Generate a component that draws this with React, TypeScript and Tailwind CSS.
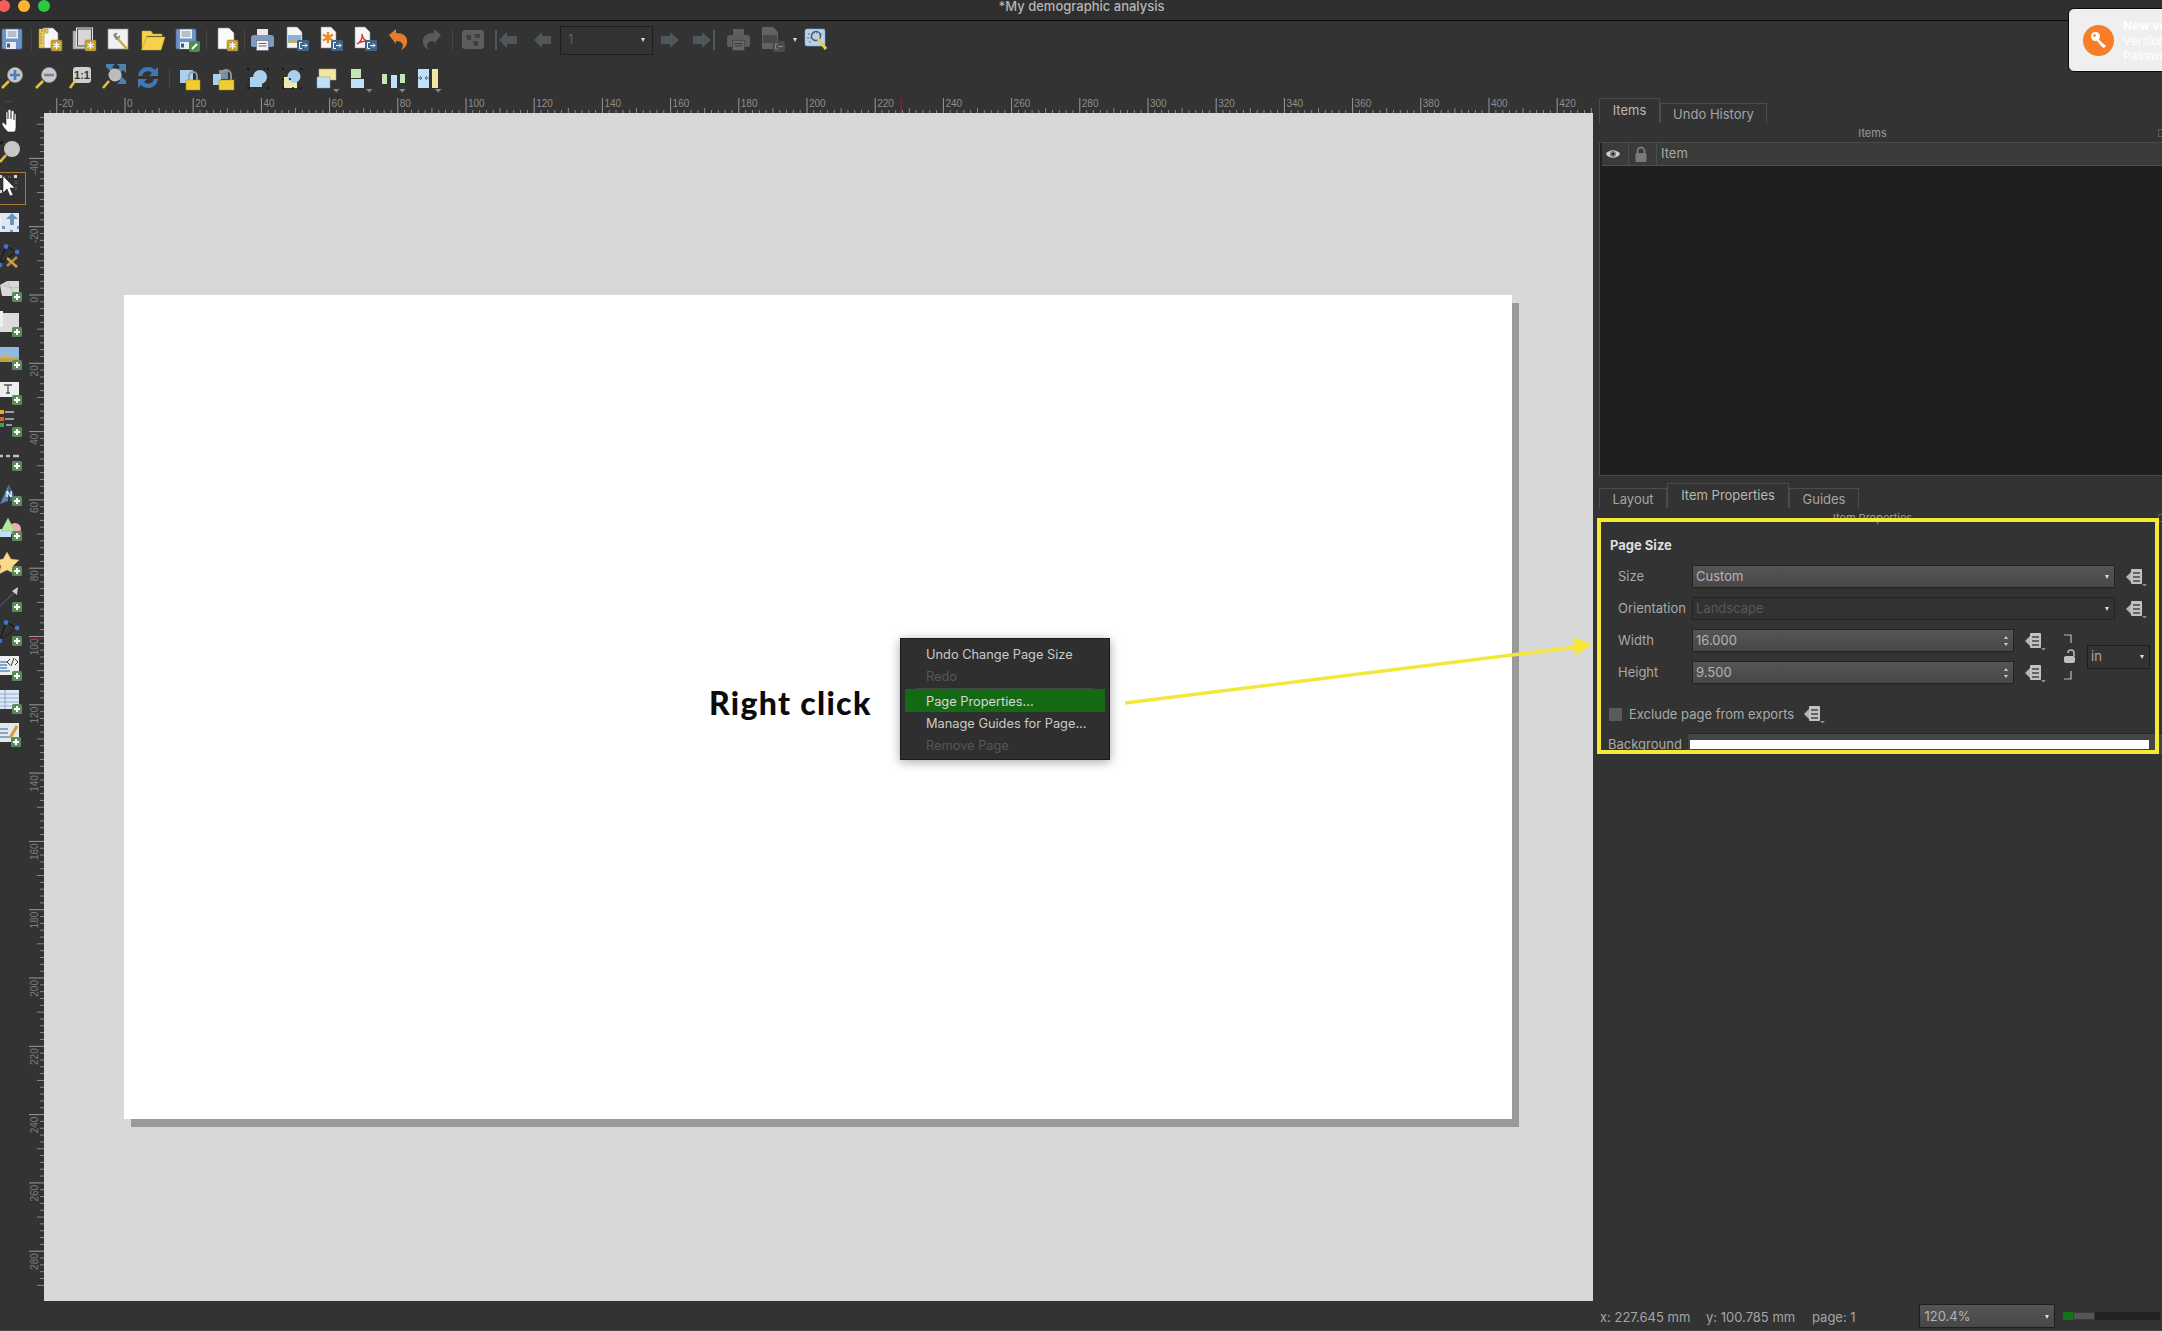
import React from "react";

const S = ({ children, w = 28 }: { children: React.ReactNode; w?: number }) => (
  <svg width={w} height={28} viewBox={`0 0 ${w} 28`} className="shrink-0 overflow-visible">{children}</svg>
);

const Gold = ({ x = 16, y = 14, op = 1 }: { x?: number; y?: number; op?: number }) => (
  <g opacity={op}>
    <rect x={x} y={y} width="11" height="11" rx="1.5" fill="#c6a32c" stroke="#9a7f20" strokeWidth=".5" />
    <path d={`M${x + 5.5} ${y + 2}v7M${x + 2.4} ${y + 3.7}l6.2 3.6M${x + 8.6} ${y + 3.7}l-6.2 3.6`} stroke="#fff" strokeWidth="1.3" />
  </g>
);
const Exp = ({ x = 15, y = 14 }: { x?: number; y?: number }) => (
  <g>
    <rect x={x} y={y} width="12" height="11" rx="1.5" fill="#3f6485" />
    <path d={`M${x + 5} ${y + 2.5}h-2.5v6h2.5`} stroke="#fff" strokeWidth="1" fill="none" />
    <path d={`M${x + 5} ${y + 5.5}h5M${x + 8} ${y + 3.5}l2 2-2 2`} stroke="#fff" strokeWidth="1" fill="none" />
  </g>
);
const Plus = ({ x = 18, y = 17 }: { x?: number; y?: number }) => (
  <g>
    <rect x={x} y={y} width="10" height="10" rx="1.5" fill="#5c8a5f" />
    <path d={`M${x + 5} ${y + 2}v6M${x + 2} ${y + 5}h6`} stroke="#fff" strokeWidth="2" />
  </g>
);
const PageShape = ({ x = 6, y = 2, w = 15, h = 21, fill = "#f6f6f6" }: { x?: number; y?: number; w?: number; h?: number; fill?: string }) => (
  <path d={`M${x} ${y}h${w - 5}l5 5v${h - 5}h-${w}z`} fill={fill} stroke="#8c8c8c" strokeWidth=".6" />
);
const Floppy = () => (
  <g>
    <rect x="4" y="3" width="20" height="20" rx="1.5" fill="#6f93c4" stroke="#4d6f9c" strokeWidth=".7" />
    <rect x="8" y="3.5" width="12" height="9" fill="#eef0f3" />
    <path d="M9.5 6h9M9.5 8h9M9.5 10h9" stroke="#7d8ea6" strokeWidth="1" />
    <rect x="8" y="16" width="10" height="7" fill="#e9edf2" />
    <rect x="9" y="17.5" width="3" height="4" fill="#3e5a80" />
  </g>
);

const Mag = ({ children }: { children?: React.ReactNode }) => (
  <g>
    <circle cx="17" cy="11" r="7.5" fill="#c9c9c9" stroke="#9b9b9b" strokeWidth=".7" />
    <path d="M11 17 4 24" stroke="#e4c044" strokeWidth="2.6" />
    {children}
  </g>
);

const DropTri = ({ x }: { x: number }) => <path d={`M${x - 3} 25h6.500l-3.250 3.500z`} fill="#888" />;

const icons: Record<string, React.ReactNode> = {
  save: <Floppy />,
  newLayout: (
    <g>
      <PageShape x={7} y={2} w={15} h={20} />
      <path d="M3 3h9v4H8v15H3z" fill="#e8cb58" stroke="#a98f2b" strokeWidth=".6" />
      <path d="M4 8h2M4 11h2M4 14h2M4 17h2M6 4v2M9 4v2" stroke="#8a7423" strokeWidth=".8" />
      <Gold x={15} y={14} />
    </g>
  ),
  dup: (
    <g>
      <rect x="3" y="5" width="16" height="18" fill="#b5b5b5" stroke="#888" strokeWidth=".6" />
      <rect x="6.5" y="2" width="16" height="19" fill="#4a4a4a" stroke="#e6e6e6" strokeWidth="1" />
      <rect x="8" y="3.500" width="13" height="16" fill="#d6d6d6" />
      <Gold x={15} y={14} />
    </g>
  ),
  manager: (
    <g>
      <rect x="4" y="3" width="20" height="20" fill="#f1f1f1" stroke="#8e8e8e" strokeWidth=".7" />
      <path d="M9 9a4 4 0 0 1 5-2l-2 2 2 2 2-2a4 4 0 0 1-4 5z" fill="#8b8b8b" />
      <path d="M14 13l9 10" stroke="#c9ad46" strokeWidth="2.5" />
    </g>
  ),
  open: <path d="M4 5h9l2 3h9v2H9l-5 13zM8.5 11H27l-4 13H3.5z" fill="#f5d24b" stroke="#c9a52c" strokeWidth=".5" />,
  saveAs: (
    <g>
      <Floppy />
      <rect x="17" y="15" width="11" height="11" rx="2" fill="#4f8a55" />
      <path d="M20 23l5-5" stroke="#fff" strokeWidth="2" />
    </g>
  ),
  newPage: (
    <g>
      <PageShape x={6} y={2} w={16} h={21} fill="#fafafa" />
      <Gold x={15} y={14} />
    </g>
  ),
  print: (
    <g>
      <rect x="9" y="3" width="11" height="8" fill="#e9e9e9" />
      <path d="M6 9h17a3 3 0 0 1 3 3v7a2 2 0 0 1-2 2H5a2 2 0 0 1-2-2v-7a3 3 0 0 1 3-3z" fill="#7e9ac0" />
      <rect x="8.5" y="14.5" width="12" height="10" fill="#f1f1f1" stroke="#5d6b7d" strokeWidth=".6" />
      <path d="M10.5 17.5h8M10.5 20h8" stroke="#5d6b7d" />
    </g>
  ),
  expImg: (
    <g>
      <PageShape x={5} y={1} w={15} h={21} />
      <rect x="6" y="9" width="13" height="8" fill="#86b2df" />
      <path d="M6 17l5-4 4 2 4-2v4z" fill="#cfaa57" />
      <Exp />
    </g>
  ),
  expSvg: (
    <g>
      <PageShape x={5} y={1} w={15} h={21} />
      <path d="M12 6v11M7 8.5l10 6M17 8.5l-10 6" stroke="#ee8a1e" strokeWidth="2.4" />
      <Exp />
    </g>
  ),
  expPdf: (
    <g>
      <PageShape x={5} y={1} w={15} h={21} />
      <path d="M7 18c3-1 6-6 5-10 0 4 3 7 6 7-3 0-7 0-11 3z" fill="none" stroke="#d9322b" strokeWidth="1.4" />
      <Exp />
    </g>
  ),
  undo: <path d="M5 9 12 3v4c7 0 12 3 11 10-.5 3-3 6-6 7 3-3 3-9-5-9v3z" fill="#e67c2c" />,
  redo: <path d="M23 9 16 3v4c-7 0-12 3-11 10 .5 3 3 6 6 7-3-3-3-9 5-9v3z" fill="#565b5e" />,
  map: (
    <g>
      <rect x="3" y="4" width="22" height="19" rx="3" fill="#5d5d5d" />
      <path d="M7 9h5v5H8zM15 8h6v4h-4zM14 15h5v5h-4z" fill="#3f3f3f" />
    </g>
  ),
  first: (
    <g fill="#50575b">
      <path d="M5 14 13 6v4h10v8H13v4z" />
      <rect x="1" y="4" width="2" height="20" />
    </g>
  ),
  prev: <path d="M6 14 14 6v4h9v8h-9v4z" fill="#50575b" />,
  next: <path d="M23 14 14 6v4H5v8h9v4z" fill="#50575b" />,
  last: (
    <g fill="#50575b">
      <path d="M21 14 12 6v4H3v8h9v4z" />
      <rect x="23" y="4" width="2" height="20" />
    </g>
  ),
  printOff: (
    <g>
      <rect x="9" y="3" width="11" height="8" fill="#5e5e5e" />
      <path d="M6 9h17a3 3 0 0 1 3 3v7a2 2 0 0 1-2 2H5a2 2 0 0 1-2-2v-7a3 3 0 0 1 3-3z" fill="#5c5c5c" />
      <rect x="8.5" y="14.5" width="12" height="10" fill="#666" stroke="#3b3b3b" strokeWidth=".6" />
      <path d="M10.5 17.5h8M10.5 20h8" stroke="#3b3b3b" />
    </g>
  ),
  expOff: (
    <g>
      <path d="M4 1h11l5 5v17H4z" fill="#626262" />
      <rect x="5" y="9" width="14" height="8" fill="#484848" />
      <rect x="15" y="15" width="12" height="11" rx="1.5" fill="#4a4a4a" />
      <path d="M20 18h-2.5v5H20M20 20.5h5" stroke="#8a8a8a" fill="none" />
    </g>
  ),
  atlas: (
    <g>
      <rect x="2" y="3" width="20" height="17" rx="2" fill="#b7d2ee" stroke="#86a7cb" strokeWidth=".6" />
      <path d="M5 8h3M10 7h4M17 8h3M4 12h5M6 16h3M15 15h3" stroke="#4d6d92" strokeWidth="1.2" strokeDasharray="2 1" />
      <circle cx="13" cy="10" r="4.5" fill="none" stroke="#555" strokeWidth="1.4" />
      <path d="M15 13l8 10" stroke="#e7ca55" strokeWidth="3" />
    </g>
  ),
  zoomIn: (
    <Mag>
      <path d="M17 6v10M12 11h10" stroke="#4a7fbe" strokeWidth="2.6" />
    </Mag>
  ),
  zoomOut: (
    <Mag>
      <path d="M12 11h10" stroke="#6f87a3" strokeWidth="2.6" />
    </Mag>
  ),
  zoom11: (
    <g>
      <rect x="7" y="3" width="18" height="16" rx="3" fill="#cfcfcf" />
      <path d="M9 17 4 24" stroke="#e4c044" strokeWidth="2.6" />
      <text x="16" y="15" textAnchor="middle" fontSize="11" fontWeight="700" fill="#333" fontFamily="'Liberation Sans', sans-serif">1:1</text>
    </g>
  ),
  zoomFull: (
    <g>
      <path d="M6 0h9l-3 3 3 3-3 3-6-6zM26 0v9l-3-3-3 3-3-3 3-3-3-3zM26 20h-9l3-3-3-3 3-3 6 6z" fill="#507fb3" />
      <circle cx="15" cy="11" r="6.5" fill="#bdbdbd" />
      <path d="M9 17 3 24" stroke="#e4c044" strokeWidth="2.6" />
    </g>
  ),
  refresh: (
    <g fill="#3f78b5">
      <path d="M4 12C5 6 9 3 14 3c3 0 5 1 7 3l3-3v9h-9l3-3c-3-3-9-2-10 3z" />
      <path d="M24 15c-1 6-5 9-10 9-3 0-5-1-7-3l-3 3v-9h9l-3 3c3 3 9 2 10-3z" />
    </g>
  ),
  lock: (
    <g>
      <rect x="4" y="6" width="13" height="13" fill="#a9d0ee" />
      <path d="M13 16v-4a4 4 0 0 1 8 0v4" fill="none" stroke="#9a9a9a" strokeWidth="1.800" />
      <rect x="10" y="16" width="14" height="10" fill="#eccd32" stroke="#a88f17" strokeWidth=".5" />
    </g>
  ),
  unlock: (
    <g>
      <rect x="3" y="10" width="8" height="11" fill="#a9d0ee" />
      <rect x="9" y="6" width="9" height="9" fill="#a9d0ee" opacity=".6" />
      <path d="M11 11a5 5 0 0 1 10 0v5" fill="none" stroke="#9a9a9a" strokeWidth="1.800" />
      <rect x="9" y="16" width="15" height="10" fill="#eccd32" stroke="#a88f17" strokeWidth=".5" />
    </g>
  ),
  group: (
    <g>
      <rect x="6" y="13" width="12" height="10" fill="#a9d0ee" />
      <circle cx="16" cy="13" r="7" fill="#a9d0ee" />
      <path d="M5 5H23M24 5V24M5 24H23M4 5V24" stroke="#111" strokeWidth=".8" strokeDasharray="1 4" />
      <path d="M3 5h2M23 5h2M3 24h2M23 24h2" stroke="#111" strokeWidth="1.600" />
    </g>
  ),
  ungroup: (
    <g>
      <rect x="6" y="13" width="13" height="11" fill="#f0eaa6" />
      <circle cx="16" cy="12.500" r="6.500" fill="#a9d0ee" />
      <path d="M4 5h2M22 5h2M4 24h2M22 24h2M14 24h2M5 15v1M11 15h2" stroke="#111" strokeWidth="1.600" />
    </g>
  ),
  raise: (
    <g>
      <rect x="7" y="5" width="17" height="11" fill="#efe7a2" stroke="#b0a96b" strokeWidth=".5" />
      <rect x="5" y="13" width="13" height="11" fill="#bfe0f7" stroke="#7f9cb3" strokeWidth=".5" />
      <DropTri x={24} />
    </g>
  ),
  align: (
    <g>
      <rect x="5" y="5" width="10" height="9" fill="#bfe8b6" />
      <rect x="5" y="15" width="13" height="9" fill="#bfe0f7" />
      <DropTri x={23} />
    </g>
  ),
  distribute: (
    <g>
      <rect x="2" y="10" width="5" height="10" fill="#bfe8b6" />
      <rect x="11" y="11" width="6" height="13" fill="#bfe0f7" />
      <rect x="20" y="10" width="5" height="9" fill="#bfe8b6" />
      <DropTri x={22} />
    </g>
  ),
  resize: (
    <g>
      <rect x="4" y="5" width="11" height="19" fill="#bfe0f7" />
      <path d="M4 14h3M15 14h-3M6 12l2 2-2 2M13 12l-2 2 2 2" stroke="#445" strokeWidth=".8" fill="none" />
      <rect x="18" y="5" width="6" height="19" fill="#efe7a2" />
      <DropTri x={24} />
    </g>
  ),
};

const tools: Record<string, React.ReactNode> = {
  hand: <path transform="translate(5 1)" d="M10 25c-3-3-6-6-6-9 1-1 3 0 4 2V6c0-2 2-2 2 0v6-8c0-2 3-2 3 0v8-7c0-2 3-2 3 0v8-5c0-2 2-2 2 0v12c0 3-1 5-2 5z" fill="#fff" stroke="#222" strokeWidth=".6" />,
  zoom: (
    <g transform="translate(1 3)">
      <circle cx="18" cy="10" r="8" fill="#c8c8c8" />
      <path d="M12 16 6 23" stroke="#e4c044" strokeWidth="2.6" />
      <path d="M7 3h2M7 3v2" stroke="#111" strokeWidth="1.4" />
    </g>
  ),
  select: (
    <g>
      <path d="M9 5h3M15 5h3M23 9v3M23 15v3" stroke="#aaa" strokeWidth=".8" strokeDasharray="1 1" />
      <rect x="6" y="3" width="3" height="3" fill="#ddd" />
      <rect x="21" y="3" width="3" height="3" fill="#ddd" />
      <rect x="6" y="18" width="3" height="3" fill="#ddd" />
      <path d="M10 4v17l4-4 3 7 3-1-3-7h5z" fill="#fff" stroke="#222" strokeWidth=".6" />
    </g>
  ),
  move: (
    <g transform="translate(0 2)">
      <rect x="3" y="4" width="23" height="19" fill="#dfe6ee" />
      <rect x="3" y="4" width="5" height="19" fill="#eee" />
      <path d="M19 4l-6 6h4v6h4v-6h4z" fill="#6a95c5" />
      <path d="M9 17h3v3H9zM17 21h3v2h-3zM24 17h2v3h-2z" fill="#6a95c5" />
    </g>
  ),
  node: (
    <g transform="translate(0 2)">
      <path d="M13 3 6 21l17-12z" fill="none" stroke="#111" strokeWidth="1" />
      <circle cx="13" cy="3.500" r="2.400" fill="#3b74d1" />
      <circle cx="24" cy="9" r="2.400" fill="#3b74d1" />
      <circle cx="7" cy="22" r="2.400" fill="#3b74d1" />
      <path d="M14 23l10-9" stroke="#b9863a" strokeWidth="2.600" />
      <path d="M14 15l10 9" stroke="#c4a24d" strokeWidth="2.600" />
    </g>
  ),
  mapItem: (
    <g>
      <path d="M7 10 14 6h12v12l-8 3H9z" fill="#d8d8d8" />
      <path d="M10 10l8 3 3 7M14 6l4 7 8-1" stroke="#aaa" strokeWidth=".6" fill="none" />
      <Plus x={19} y={17} />
    </g>
  ),
  d3: (
    <g>
      <rect x="7" y="3" width="19" height="19" fill="#dcdcdc" />
      <rect x="3" y="1" width="7" height="16" fill="#eee" />
      <Plus x={19} y={17} />
    </g>
  ),
  picture: (
    <g>
      <rect x="4" y="3" width="22" height="15" fill="#8dbbe6" />
      <path d="M4 18l7-9 5 4 4-1 6 6z" fill="#d9b24f" />
      <rect x="4" y="14" width="22" height="4" fill="#c1a04a" />
      <Plus x={19} y={16} />
    </g>
  ),
  label: (
    <g>
      <rect x="4" y="3" width="22" height="15" fill="#eeeeee" />
      <path d="M11 6h8M15 6v8M13 14h4" stroke="#555" strokeWidth="1.3" />
      <Plus x={19} y={16} />
    </g>
  ),
  legend: (
    <g>
      <rect x="5" y="-3" width="6" height="4" fill="#eca52e" />
      <path d="M12 -1h9" stroke="#bbb" strokeWidth="1.600" />
      <rect x="5" y="4" width="6" height="4" fill="#e25b2a" />
      <rect x="5" y="10" width="6" height="4" fill="#39a35a" />
      <path d="M12 6h9M13 12h6" stroke="#bbb" strokeWidth="1.600" />
      <Plus x={19} y={14} />
    </g>
  ),
  scale: (
    <g>
      <path d="M5 9h5M13 9h4M20 9h6" stroke="#c0c0c0" strokeWidth="2.400" />
      <Plus x={19} y={14} />
    </g>
  ),
  north: (
    <g>
      <path d="M16 2 7 22l8-3z" fill="#5a84b8" />
      <path d="M16 2l1 17 7 1z" fill="#3f5f88" />
      <text x="16" y="15" textAnchor="middle" fontSize="9" fontWeight="700" fill="#fff" fontFamily="'Liberation Sans', sans-serif">N</text>
      <Plus x={19} y={14} />
    </g>
  ),
  shape: (
    <g>
      <circle cx="22" cy="13" r="6" fill="#eab0ad" />
      <rect x="3" y="13" width="15" height="8" fill="#bfe0f7" />
      <path d="M15 2l7 13H8z" fill="#b7e4a5" stroke="#7fae72" strokeWidth=".4" />
      <Plus x={19} y={15} />
    </g>
  ),
  marker: (
    <g>
      <path d="M14 2l4 7 8 1-6 6 2 8-8-4-8 4 2-8-6-6 8-1z" fill="#f9d98a" stroke="#c9a55a" strokeWidth=".4" />
      <Plus x={19} y={16} />
    </g>
  ),
  arrow: (
    <g>
      <path d="M6 22 23 6" stroke="#555" strokeWidth="1.2" />
      <path d="M25 2l-1 8-5-4z" fill="#cfcfcf" />
      <Plus x={19} y={17} />
    </g>
  ),
  nodeItem: (
    <g>
      <path d="M13 3 7 21" fill="none" stroke="#111" strokeWidth="1" />
      <path d="M13 3l11 6" fill="none" stroke="#111" strokeWidth="1" />
      <path d="M7 21l17-12" stroke="#111" strokeDasharray="2 1" fill="none" />
      <circle cx="13" cy="3.500" r="2.400" fill="#3b74d1" />
      <circle cx="24" cy="9" r="2.400" fill="#3b74d1" />
      <circle cx="7" cy="22" r="2.400" fill="#3b74d1" />
      <Plus x={19} y={17} />
    </g>
  ),
  html: (
    <g>
      <rect x="4" y="2" width="22" height="19" fill="#eeeeee" />
      <path d="M7 8h7M7 11h7M7 14h7M7 17h10" stroke="#5d8fc5" strokeWidth="1.600" />
      <path d="M17 5l-3 3 3 3M22 5l3 3-3 3M21 4l-3 8" stroke="#222" fill="none" strokeWidth=".9" />
      <Plus x={19} y={17} />
    </g>
  ),
  table: (
    <g>
      <rect x="4" y="2" width="22" height="19" fill="#dfe8f3" />
      <path d="M4 6h22M4 10h22M4 14h22M4 18h22M12 2v19" stroke="#8fb0d4" strokeWidth="1.200" />
      <Plus x={19} y={16} />
    </g>
  ),
  form: (
    <g transform="translate(0 -2)">
      <rect x="4" y="3" width="22" height="19" fill="#e4e9f0" />
      <path d="M7 9h8M7 13h8M7 17h9" stroke="#6b90bb" strokeWidth="1.400" />
      <path d="M17 18 24 6" stroke="#d99a2f" strokeWidth="3" />
      <Plus x={18} y={17} />
    </g>
  ),
};

const Tool = ({ n }: { n: string }) => (
  <div className="w-[34px] h-[34px] flex items-center justify-center shrink-0">
    <S>{icons[n]}</S>
  </div>
);
const Sep = ({ w }: { w: string }) => (
  <div className={`${w} h-[20px] flex justify-center shrink-0`}>
    <div className="w-px h-full bg-[#454545]" />
  </div>
);

const LeftTool = ({ n, h = "h-[34.4px]" }: { n: string; h?: string }) => (
  <div className={`${h} flex items-center shrink-0`}>
    <div className="-ml-[7px]">
      <S>{tools[n]}</S>
    </div>
  </div>
);

const TopRuler = () => {
  const ticks = Array.from({ length: 228 }, (_, i) => i - 11);
  return (
    <svg width="1549" height="16" className="block" fontFamily="'Liberation Sans', sans-serif">
      {ticks.map((i) => {
        const x = 81 + i * 6.82;
        const major = i % 10 === 0;
        const mid = i % 5 === 0;
        return (
          <g key={i}>
            <line x1={x} x2={x} y1={major ? 1 : mid ? 11 : 13} y2={16} stroke={major ? "#9a9a9a" : "#8a8a8a"} />
            {major && (
              <text x={x + 2} y={10} fontSize="10" fill="#8d8d8d">
                {i * 2}
              </text>
            )}
          </g>
        );
      })}
      <line x1="857" x2="857" y1="1" y2="16" stroke="#a3202a" />
    </svg>
  );
};

const LeftRuler = () => {
  const ticks = Array.from({ length: 172 }, (_, i) => i - 26);
  return (
    <svg width="15" height="1188" className="block" fontFamily="'Liberation Sans', sans-serif">
      {ticks.map((i) => {
        const y = 182 + i * 6.83;
        const major = i % 10 === 0;
        const mid = i % 5 === 0;
        return (
          <g key={i}>
            <line y1={y} y2={y} x1={major ? 0 : mid ? 8 : 11} x2={15} stroke={major ? "#9a9a9a" : "#8a8a8a"} />
            {major && (
              <text transform={`translate(9 ${y + 2}) rotate(-90)`} textAnchor="end" fontSize="10" fill="#7e7e7e">
                {i * 2}
              </text>
            )}
          </g>
        );
      })}
      <line x1="0" x2="15" y1="526" y2="526" stroke="#a3202a" />
    </svg>
  );
};

const Tri = () => <span className="w-0 h-0 border-l-[2.5px] border-r-[2.5px] border-t-[4px] border-l-transparent border-r-transparent border-t-[#ddd] shrink-0" />;

const DD = () => (
  <svg width="22" height="20" viewBox="0 0 22 20" className="shrink-0">
    <path d="M0 10l5-5v10z" fill="#b4b4b4" />
    <rect x="5" y="2" width="11" height="15" rx="1" fill="#c2c2c2" />
    <path d="M7 6h7M7 10h7M7 14h7" stroke="#444" strokeWidth="1.300" />
    <path d="M16 17h5l-2.500 2.500z" fill="#8e8e8e" />
  </svg>
);

const Field = ({ children, w, flat = false }: { children: React.ReactNode; w: string; flat?: boolean }) => (
  <div className={`${w} h-[23px] flex items-center justify-between pl-[3px] pr-[5px] border border-[#232323] text-[13px] shrink-0 ${flat ? "bg-[#323232] text-[#585858]" : "bg-linear-to-b from-[#555555] to-[#474747] text-[#b4b4b4]"}`}>
    {children}
  </div>
);
const Spin = () => (
  <div className="flex flex-col gap-[4px] items-center">
    <span className="w-0 h-0 border-l-[2px] border-r-[2px] border-b-[3px] border-l-transparent border-r-transparent border-b-[#ccc]" />
    <span className="w-0 h-0 border-l-[2px] border-r-[2px] border-t-[3px] border-l-transparent border-r-transparent border-t-[#ccc]" />
  </div>
);

const Tab = ({ label, active, w }: { label: string; active?: boolean; w: string }) => (
  <div className={`${w} ${active ? "h-[25px] text-[#b8b8b8]" : "h-[20px] pt-[2px] text-[#a5a5a5]"} border border-b-0 border-[#4c4c4c] flex items-center justify-center text-[13px] shrink-0`}>
    {label}
  </div>
);

const DockBtn = () => <span className="absolute right-0 top-[6px] w-[4px] h-[8px] border border-r-0 border-[#5c5c5c]" />;

export default function App() {
  return (
    <div className="relative w-[2162px] h-[1331px] overflow-hidden bg-[#333333] flex flex-col text-[#aaaaaa]" style={{ fontFamily: "Inter, 'Liberation Sans', sans-serif" }}>
      {/* title */}
      <div className="relative h-[21px] shrink-0 bg-[#2f2f2f] border-b border-[#0c0c0c] flex items-start justify-center">
        <div className="absolute left-[-2px] top-0 flex gap-[8px]">
          <span className="w-[12px] h-[12px] rounded-full bg-[#fb5b57]" />
          <span className="w-[12px] h-[12px] rounded-full bg-[#fdb42f]" />
          <span className="w-[12px] h-[12px] rounded-full bg-[#2cc83f]" />
        </div>
        <span className="text-[13px] font-medium leading-[13px] -mr-[1px] text-[#b5b5b5]">*My demographic analysis</span>
      </div>

      {/* toolbars */}
      <div className="h-[38px] shrink-0 flex items-center -ml-[5px]">
        <Tool n="save" />
        <Sep w="w-[4px]" />
        <Tool n="newLayout" />
        <Tool n="dup" />
        <Tool n="manager" />
        <Tool n="open" />
        <Tool n="saveAs" />
        <Sep w="w-[6px]" />
        <Tool n="newPage" />
        <Sep w="w-[2px]" />
        <Tool n="print" />
        <Tool n="expImg" />
        <Tool n="expSvg" />
        <Tool n="expPdf" />
        <Tool n="undo" />
        <Tool n="redo" />
        <Sep w="w-[7px]" />
        <Tool n="map" />
        <div className="w-px" />
        <Tool n="first" />
        <Tool n="prev" />
        <div className="w-[93px] h-[29px] ml-px border border-[#1f1f1f] flex items-center justify-between px-[7px] text-[13px] text-[#5e5e5e] shrink-0">
          1<Tri />
        </div>
        <Tool n="next" />
        <Tool n="last" />
        <Tool n="printOff" />
        <Tool n="expOff" />
        <div className="w-[11px] flex justify-center">
          <Tri />
        </div>
        <Tool n="atlas" />
      </div>
      <div className="h-[38px] shrink-0 flex items-center -ml-[5px]">
        <Tool n="zoomIn" />
        <Tool n="zoomOut" />
        <Tool n="zoom11" />
        <Tool n="zoomFull" />
        <Tool n="refresh" />
        <Sep w="w-[8px]" />
        <Tool n="lock" />
        <Tool n="unlock" />
        <Tool n="group" />
        <Tool n="ungroup" />
        <Tool n="raise" />
        <Tool n="align" />
        <Tool n="distribute" />
        <Tool n="resize" />
      </div>

      {/* main */}
      <div className="flex-1 min-h-0 flex">
        {/* left tools */}
        <div className="w-[29px] shrink-0 overflow-hidden flex flex-col pt-[4px]">
          <div className="ml-[5px] w-[8px] h-px bg-[#4a4a4a] shrink-0" />
          <div className="h-[3px] shrink-0" />
          <LeftTool n="hand" h="h-[30px]" />
          <LeftTool n="zoom" h="h-[30px]" />
          <div className="h-[4px] shrink-0" />
          <div className="relative">
            <div className="absolute left-[-4px] top-[3px] w-[30px] h-[33px] border border-[#b0793a]" />
            <LeftTool n="select" />
          </div>
          <LeftTool n="move" />
          <LeftTool n="node" />
          <LeftTool n="mapItem" />
          <LeftTool n="d3" />
          <LeftTool n="picture" />
          <LeftTool n="label" />
          <LeftTool n="legend" />
          <LeftTool n="scale" />
          <LeftTool n="north" />
          <LeftTool n="shape" />
          <LeftTool n="marker" />
          <LeftTool n="arrow" />
          <LeftTool n="nodeItem" />
          <LeftTool n="html" />
          <LeftTool n="table" />
          <LeftTool n="form" />
        </div>

        {/* canvas column */}
        <div className="w-[1564px] shrink-0 flex flex-col">
          <div className="h-[16px] pl-[15px] shrink-0">
            <TopRuler />
          </div>
          <div className="flex-1 min-h-0 flex">
            <div className="w-[15px] shrink-0 overflow-hidden">
              <LeftRuler />
            </div>
            <div className="flex-1 bg-[#d8d8d8] pl-[80px] pt-[182px]">
              <div className="w-[1388px] h-[824px] bg-white shadow-[7px_8px_0_#9a9a9a]" />
            </div>
          </div>
        </div>

        {/* right panel */}
        <div className="flex-1 min-w-0 flex flex-col pl-[6px]">
          <div className="h-[26px] shrink-0 flex items-end pt-px">
            <Tab label="Items" active w="w-[61px]" />
            <Tab label="Undo History" w="w-[107px]" />
          </div>
          <div className="relative h-[19px] pt-px shrink-0 flex items-center justify-center text-[11px] text-[#9a9a9a] pr-[16px]">
            Items
            <DockBtn />
          </div>
          <div className="h-[334px] shrink-0 bg-[#1f1f1f] border-t border-l border-b border-[#4a4a4a] flex flex-col">
            <div className="h-[23px] bg-[#3a3a3a] border-b border-[#4d4d4d] flex items-stretch ml-[2px] text-[13px] text-[#a8a8a8]">
              <div className="w-[27px] pr-[4px] flex items-center justify-center border-r border-[#4d4d4d]">
                <svg width="16" height="12" viewBox="0 0 16 12">
                  <path d="M1 6c3-5 11-5 14 0-3 5-11 5-14 0z" fill="#d0d0d0" />
                  <circle cx="8" cy="6" r="3" fill="#777" />
                  <circle cx="8" cy="6" r="1.200" fill="#222" />
                </svg>
              </div>
              <div className="w-[28px] pr-[4px] flex items-center justify-center border-r border-[#4d4d4d]">
                <svg width="14" height="16" viewBox="0 0 14 16">
                  <path d="M3.500 8V5a3.500 3.500 0 0 1 7 0v3" fill="none" stroke="#888" strokeWidth="1.500" />
                  <rect x="1.500" y="7" width="11" height="9" rx="1.500" fill="#7a7a7a" />
                </svg>
              </div>
              <div className="flex items-center pl-[4px]">Item</div>
            </div>
          </div>

          <div className="h-[32px] shrink-0 flex items-end">
            <Tab label="Layout" w="w-[68px]" />
            <Tab label="Item Properties" active w="w-[122px]" />
            <Tab label="Guides" w="w-[70px]" />
          </div>

          <div className="h-[246px] shrink-0 overflow-hidden -ml-[6px] relative">
            <div className="relative h-[20px] pt-px pr-[10px] text-center text-[11px] leading-[18px] text-[#9a9a9a]">
              Item Properties
              <DockBtn />
            </div>
            <div className="pl-[17px] pt-[8px] text-[13px] font-bold leading-[18px] text-[#dedede]">Page Size</div>
            <div className="pl-[25px] pt-[11px] flex flex-col gap-[9px]">
              <div className="flex items-center">
                <span className="w-[74px] text-[13px]">Size</span>
                <Field w="w-[423px]">
                  Custom
                  <Tri />
                </Field>
                <div className="ml-[11px]">
                  <DD />
                </div>
              </div>
              <div className="flex items-center">
                <span className="w-[74px] text-[13px]">Orientation</span>
                <Field w="w-[423px]" flat>
                  Landscape
                  <Tri />
                </Field>
                <div className="ml-[11px]">
                  <DD />
                </div>
              </div>
              <div className="flex items-center">
                <div className="flex flex-col gap-[9px]">
                  <div className="flex items-center">
                    <span className="w-[74px] text-[13px]">Width</span>
                    <Field w="w-[322px]">
                      16.000
                      <Spin />
                    </Field>
                    <div className="ml-[11px]">
                      <DD />
                    </div>
                  </div>
                  <div className="flex items-center">
                    <span className="w-[74px] text-[13px]">Height</span>
                    <Field w="w-[322px]">
                      9.500
                      <Spin />
                    </Field>
                    <div className="ml-[11px]">
                      <DD />
                    </div>
                  </div>
                </div>
                <div className="ml-[17px] w-[10px] flex flex-col items-center">
                  <svg width="12" height="46" viewBox="0 0 12 46">
                    <path d="M1 1h7v8M1 45h7v-8" fill="none" stroke="#bbb" strokeWidth="1.200" />
                    <path d="M5 19a3 3 0 0 1 6 0v3" fill="none" stroke="#bbb" strokeWidth="1.500" />
                    <rect x="1" y="22" width="11" height="7" rx="2" fill="#c0c0c0" />
                  </svg>
                </div>
                <div className="ml-[13px] w-[63px] h-[24px] border border-[#1f1f1f] flex items-center justify-between pl-[3px] pr-[5px] text-[13px]">
                  in
                  <Tri />
                </div>
              </div>
            </div>
            <div className="pl-[16px] pt-[20px] flex items-center">
              <span className="w-[13px] h-[13px] bg-[#5a5a5a]" />
              <span className="ml-[7px] text-[13px] leading-[16px]">Exclude page from exports</span>
              <div className="ml-[10px]">
                <DD />
              </div>
            </div>
            <div className="pl-[15px] pt-[9px] flex items-start">
              <span className="w-[80px] text-[13px] leading-[22px] shrink-0">Background</span>
              <div className="flex-1 h-[26px] bg-[#444444] border-t border-[#2a2a2a] pl-[2px] pt-[6px] pr-[13px]">
                <div className="h-[9px] bg-white" />
              </div>
            </div>
          </div>
          <div className="flex-1" />
        </div>
      </div>

      {/* status */}
      <div className="h-[30px] shrink-0 flex items-center pt-px text-[13px] text-[#a5a5a5] border-b border-[#4a4a4a]">
        <div className="ml-[1600px] w-[106px] pt-[3px]">x: 227.645 mm</div>
        <div className="w-[106px] pt-[3px]">y: 100.785 mm</div>
        <div className="w-[106.500px] pt-[3px]">page: 1</div>
        <div className="w-[136px] h-[24px] border border-[#1f1f1f] bg-linear-to-b from-[#555555] to-[#474747] flex items-center justify-between pl-[5px] pr-[5px] pt-[2px] text-[13px] text-[#b4b4b4]">
          120.4%
          <Tri />
        </div>
        <div className="ml-[8px] flex-1 h-[8px] bg-[#222222] flex mr-[2px]">
          <div className="w-[10px] bg-[#17701a]" />
          <div className="w-[22px] bg-[#555555] border border-[#3a3a3a]" />
        </div>
      </div>

      {/* annotations over the screenshot */}
      <div className="absolute left-[709px] top-[680px] text-[32px] leading-[46px] font-black tracking-[1.3px] text-[#0b0b0b]" style={{ fontFamily: "Lato, sans-serif" }}>
        Right click
      </div>
      <div className="absolute left-[900px] top-[638px] w-[210px] h-[122px] bg-[#2f2f2f] border border-[#1a1a1a] shadow-[0_2px_10px_rgba(0,0,0,0.35)] pt-[5px] text-[12.800px] text-[#cacaca]">
        <div className="h-[22px] pl-[25px] leading-[22px]">Undo Change Page Size</div>
        <div className="h-[22px] pl-[25px] leading-[22px] text-[#565656]">Redo</div>
        <div className="mx-[15px] h-px bg-[#444444]" />
        <div className="mx-[4px] h-[23px] pl-[21px] leading-[25px] bg-[#146a14] text-[#d8d8d8]">Page Properties...</div>
        <div className="h-[22px] pl-[25px] leading-[24px]">Manage Guides for Page...</div>
        <div className="h-[22px] pl-[25px] leading-[24px] text-[#565656]">Remove Page</div>
      </div>
      <svg className="absolute left-0 top-0 pointer-events-none" width="2162" height="1331">
        <line x1="1125" y1="703" x2="1576" y2="647" stroke="#f4e73a" strokeWidth="3.500" />
        <path d="M1592 644 1573 637 1575 656z" fill="#f4e73a" />
      </svg>
      <div className="absolute left-[1597px] top-[518px] w-[562px] h-[236px] border-[4px] border-[#f4e933] pointer-events-none" />

      {/* notification */}
      <div className="absolute left-[2068px] top-[8px] w-[110px] h-[64px] rounded-[6px] bg-[#efefef] border border-[#0a0a0a] flex items-center">
        <div className="ml-[14px] w-[31px] h-[31px] rounded-full bg-[#f97c28] flex items-center justify-center shrink-0">
          <svg width="20" height="20" viewBox="0 0 20 20">
            <circle cx="6.500" cy="6.500" r="4.500" fill="#fff" />
            <circle cx="5.500" cy="5.500" r="1.300" fill="#f97c28" />
            <path d="M9 9l8 7-2 2-2-1-5-6z" fill="#fff" />
          </svg>
        </div>
        <div className="ml-[9px] flex flex-col text-[12px] leading-[15px] text-white whitespace-nowrap">
          <span className="font-bold">New version</span>
          <span>Version</span>
          <span>Password</span>
        </div>
      </div>
    </div>
  );
}
